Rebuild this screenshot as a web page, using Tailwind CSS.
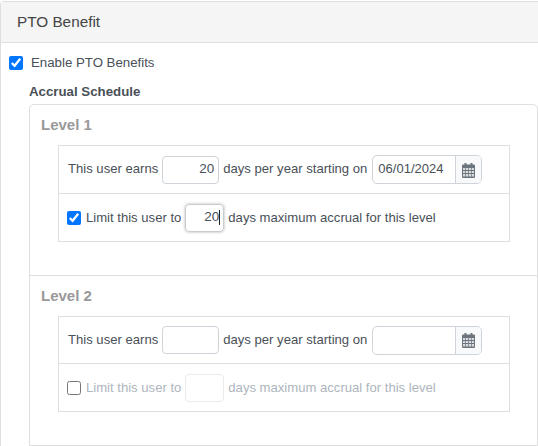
<!DOCTYPE html>
<html>
<head>
<meta charset="utf-8">
<script src="https://cdn.jsdelivr.net/npm/@tailwindcss/browser@4"></script>
</head>
<body class="bg-white font-['Liberation_Sans',Arial,sans-serif] text-[13.1px] text-[#495057] overflow-hidden">
<div class="w-[538px] h-[446px] overflow-hidden pt-px">
  <div class="border-l border-t border-[#dfdfdf] rounded-tl-[4px] h-[445px]">
    <div class="h-[41px] bg-[#f5f5f5] border-b border-[#dfdfdf] pl-[16px] flex items-center text-[15.3px] text-[#444]">PTO Benefit</div>
    <div class="pl-[8px] pt-[12px]">
      <label class="flex items-center h-[16px] text-[13.25px]">
        <input type="checkbox" checked class="w-[14px] h-[14px] accent-[#0075ff] m-0">
        <span class="ml-[8px]">Enable PTO Benefits</span>
      </label>
      <div class="pl-[20px]">
        <div class="mt-[13px] h-[16px] font-bold text-[13.28px] flex items-center">Accrual Schedule</div>
        <div class="mt-[4px] w-[509px] h-[342px] border border-[#dfdfdf] rounded-t-[5px]">
          <section class="h-[171px] border-b border-[#dfdfdf]">
            <div class="pl-[11px] pt-[11px] h-[40px] text-[15px] leading-[18px] font-bold text-[#999]">Level 1</div>
            <div class="ml-[28px] w-[452px] border border-[#dfdfdf]">
              <div class="h-[48px] border-b border-[#dfdfdf] pl-[9px] flex items-center">
                <span class="mb-px">This user earns</span>
                <input value="20" class="ml-[4px] w-[57px] h-[28px] border border-[#ced4da] rounded-[4px] text-[13.5px] text-right pr-[4px] pb-[2px] outline-none">
                <span class="ml-[4px] mb-px">days per year starting on</span>
                <div class="ml-[5px] flex w-[110px] h-[29px] border border-[#ced4da] rounded-[5px] overflow-hidden">
                  <input value="06/01/2024" class="w-[82px] pl-[5px] pb-px text-[13px] outline-none">
                  <div class="flex-1 bg-[#f8f9fa] border-l border-[#ced4da] flex items-center justify-center">
                    <svg width="13" height="16" viewBox="0 0 13 16" class="block"><path fill="#6c757d" d="M0 3.5A1 1 0 0 1 1 2.500h1.500V1h2v1.500h4V1h2v1.500H12a1 1 0 0 1 1 1V15a1 1 0 0 1-1 1H1a1 1 0 0 1-1-1z"/><path fill="#d8dadd" d="M1 6h2.300v2H1zM4 6h2.300v2H4zM7 6h2v2H7zM9.700 6H12v2H9.700zM1 9h2.300v2H1zM4 9h2.300v2H4zM7 9h2v2H7zM9.700 9H12v2H9.700zM1 12h2.300v2.500H1zM4 12h2.300v2.500H4zM7 12h2v2.500H7zM9.700 12H12v2.500H9.700z"/></svg>
                  </div>
                </div>
              </div>
              <div class="h-[47px] pl-[8px] flex items-center">
                <input type="checkbox" checked class="w-[14px] h-[14px] accent-[#0075ff] m-0">
                <span class="ml-[5px]">Limit this user to</span>
                <div class="ml-[4px] w-[39px] h-[28px] border border-[#c8ccd0] rounded-[4px] shadow-[0_0_3px_rgba(0,0,0,0.3)] flex items-center justify-end pr-[3px] text-[13.5px]"><span>20</span><span class="w-px h-[15px] bg-[#222]"></span></div>
                <span class="ml-[4px]">days maximum accrual for this level</span>
              </div>
            </div>
          </section>
          <section>
            <div class="pl-[11px] pt-[11px] h-[40px] text-[15px] leading-[18px] font-bold text-[#999]">Level 2</div>
            <div class="ml-[28px] w-[452px] border border-[#dfdfdf]">
              <div class="h-[47px] border-b border-[#dfdfdf] pl-[9px] flex items-center">
                <span class="mb-px">This user earns</span>
                <input class="ml-[4px] w-[57px] h-[28px] border border-[#ced4da] rounded-[4px] outline-none">
                <span class="ml-[4px] mb-px">days per year starting on</span>
                <div class="ml-[5px] flex w-[110px] h-[29px] border border-[#ced4da] rounded-[5px] overflow-hidden">
                  <input class="w-[82px] pl-[5px] outline-none">
                  <div class="flex-1 bg-[#f8f9fa] border-l border-[#ced4da] flex items-center justify-center">
                    <svg width="13" height="16" viewBox="0 0 13 16" class="block"><path fill="#6c757d" d="M0 3.5A1 1 0 0 1 1 2.500h1.500V1h2v1.500h4V1h2v1.500H12a1 1 0 0 1 1 1V15a1 1 0 0 1-1 1H1a1 1 0 0 1-1-1z"/><path fill="#d8dadd" d="M1 6h2.300v2H1zM4 6h2.300v2H4zM7 6h2v2H7zM9.700 6H12v2H9.700zM1 9h2.300v2H1zM4 9h2.300v2H4zM7 9h2v2H7zM9.700 9H12v2H9.700zM1 12h2.300v2.500H1zM4 12h2.300v2.500H4zM7 12h2v2.500H7zM9.700 12H12v2.500H9.700z"/></svg>
                  </div>
                </div>
              </div>
              <div class="h-[47px] pl-[8px] flex items-center text-[#adb5bd]">
                <input type="checkbox" class="w-[14px] h-[14px] m-0">
                <span class="ml-[5px]">Limit this user to</span>
                <div class="ml-[4px] w-[39px] h-[28px] border border-[#e9ecef] rounded-[4px]"></div>
                <span class="ml-[4px]">days maximum accrual for this level</span>
              </div>
            </div>
          </section>
        </div>
      </div>
    </div>
  </div>
</div>
</body>
</html>
